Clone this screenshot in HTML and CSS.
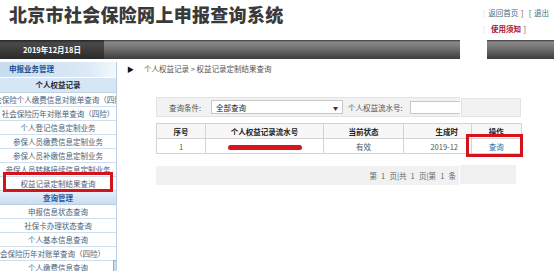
FILE: index.html
```html
<!DOCTYPE html>
<html lang="zh-CN">
<head>
    <meta charset="UTF-8">
    <title>北京市社会保险网上申报查询系统</title>
    <link rel="stylesheet" href="styles.css">
</head>
<body>

<header class="top">
    <div class="top__title">北京市社会保险网上申报查询系统</div>
    <div class="top__links">
        <div class="top__row"><span class="top__bracket">[</span> <a class="top__link">返回首页</a> ] &nbsp;[ <a class="top__link">退出</a></div>
        <div class="top__row"><span class="top__bracket">[</span> &nbsp;<a class="top__notice">使用须知</a> ]</div>
    </div>
</header>

<div class="bars">
    <div class="bar bar--main"><div class="bar__date">2019年12月18日</div></div>
    <div class="bar bar--side"></div>
</div>

<div class="content">
    <!-- Left menu -->
    <nav class="menu">
        <div class="menu__group">申报业务管理</div>
        <div class="menu__title">个人权益记录</div>
        <div class="menu__item">社会保险个人缴费信息对账单查询（四险）</div>
        <div class="menu__item">社会保险历年对账单查询（四险）</div>
        <div class="menu__item">个人登记信息定制业务</div>
        <div class="menu__item">参保人员缴费信息定制业务</div>
        <div class="menu__item">参保人员补缴信息定制业务</div>
        <div class="menu__item">参保人员转移接续信息定制业务</div>
        <div class="menu__item">权益记录定制结果查询</div>
        <div class="menu__section">查询管理</div>
        <div class="menu__item">申报信息状态查询</div>
        <div class="menu__item">社保卡办理状态查询</div>
        <div class="menu__item">个人基本信息查询</div>
        <div class="menu__item menu__item--left">会保险历年对账单查询（四险）</div>
        <div class="menu__item">个人缴费信息查询</div>
        <div class="mark mark--menu"></div>
        <div class="menu__scroll"></div>
    </nav>

    <!-- Main panel -->
    <main class="panel">
        <div class="crumb"><span class="crumb__arrow">&#9654;</span>个人权益记录 &gt; 权益记录定制结果查询</div>

        <div class="query">
            <span class="query__label">查询条件:</span>
            <div class="query__select">全部查询<span class="query__caret">&#9660;</span></div>
            <span class="query__label query__label--no">个人权益流水号:</span>
            <div class="query__input"></div>
        </div>

        <table class="grid">
            <tr>
                <th class="grid__no">序号</th>
                <th class="grid__serial">个人权益记录流水号</th>
                <th class="grid__state">当前状态</th>
                <th class="grid__time">生成时</th>
            </tr>
            <tr>
                <td>1</td>
                <td><span class="grid__redact"></span></td>
                <td>有效</td>
                <td class="grid__time">2019-12</td>
            </tr>
        </table>

        <div class="pager">第 1 页|共 1 页|第 1 条</div>
    </main>

    <!-- Right crop of the same page -->
    <aside class="side">
        <div class="side__query"></div>
        <table class="grid grid--side">
            <tr>
                <th class="grid__gap"></th>
                <th>操作</th>
            </tr>
            <tr>
                <td class="grid__gap"></td>
                <td><a class="grid__link">查询</a></td>
            </tr>
        </table>
        <div class="side__pager"></div>
        <div class="mark mark--side"></div>
    </aside>
</div>

</body>
</html>
```

FILE: styles.css
```css
/* General styles */
* {
    box-sizing: border-box;
}
body {
    margin: 0;
    width: 554px;
    height: 271px;
    overflow: hidden;
    background: #fff;
    font-family: "Noto Sans CJK SC", "Liberation Sans", sans-serif;
    font-size: 7.5px;
    color: #333;
}
a {
    text-decoration: none;
}

/* Header */
.top {
    display: flex;
    height: 40px;
}
.top__title {
    width: 483px;
    padding: 3px 0 0 9px;
    font-size: 18px;
    font-weight: 900;
    letter-spacing: 0.3px;
    line-height: 22px;
    color: #3a3a3a;
}
.top__links {
    padding-top: 8px;
    font-size: 7.5px;
    color: #555;
    white-space: nowrap;
}
.top__row {
    height: 16px;
    line-height: 10px;
    word-spacing: 1px;
}
.top__bracket {
    color: #ddd;
}
.top__link {
    color: #3d6f86;
}
.top__notice {
    color: #b0121b;
    font-weight: bold;
}

/* Dark bars */
.bars {
    display: flex;
    gap: 27px;
    height: 19px;
}
.bar {
    background: linear-gradient(#3a3a3a 0, #8a8a8a 2px, #6c6c6c 50%, #3c3c3c 100%);
}
.bar--main {
    width: 460px;
}
.bar--side {
    flex: 1;
}
.bar__date {
    width: 104px;
    height: 100%;
    background: linear-gradient(#262626 0, #4a4a4a 3px, #3a3a3a 60%, #2a2a2a 100%);
    color: #fff;
    font-weight: bold;
    font-size: 7.5px;
    line-height: 19px;
    text-align: center;
}

/* Body */
.content {
    display: flex;
    margin-top: 3px;
}

/* Menu */
.menu {
    position: relative;
    width: 117px;
    height: 210px;
    border-right: 1px solid #b9cde0;
    overflow: hidden;
}
.menu__group {
    height: 15px;
    padding-left: 9px;
    line-height: 14px;
    font-weight: bold;
    color: #1e4f8e;
    background: linear-gradient(90deg, #c7dcf0 0, #dce9f6 75%, #f4f8fc 100%);
}
.menu__title {
    height: 15px;
    margin-top: 1px;
    line-height: 14px;
    text-align: center;
    font-weight: bold;
    color: #1d2b3c;
    background: #d6e6f5;
    border-bottom: 1px solid #bcd3e8;
}
.menu__item {
    display: flex;
    justify-content: center;
    height: 14px;
    line-height: 13px;
    white-space: nowrap;
    color: #4b6178;
    border-bottom: 1px solid #cfdfee;
}
.menu__item--left {
    justify-content: flex-start;
}
.menu__section {
    height: 14px;
    line-height: 13px;
    text-align: center;
    font-weight: bold;
    color: #2256a6;
    background: linear-gradient(#e6f0f9, #c9ddef);
    border-bottom: 1px solid #b7cde3;
}
.menu__scroll {
    position: absolute;
    right: -1px;
    bottom: 0;
    width: 4px;
    height: 12px;
    background: #c6dbef;
    border: 1px solid #8fb2d3;
}

/* Annotation frames */
.mark {
    position: absolute;
    border: 3px solid #d3141c;
}
.mark--menu {
    left: 3px;
    top: 110px;
    width: 110px;
    height: 20px;
}
.mark--side {
    left: 6px;
    top: 72px;
    width: 57px;
    height: 23px;
}

/* Main panel */
.panel {
    width: 343px;
}
.crumb {
    height: 12px;
    margin-top: 1px;
    padding-left: 10px;
    line-height: 12px;
    color: #555;
}
.crumb__arrow {
    display: inline-block;
    width: 17px;
    font-size: 7px;
    color: #111;
}
.query {
    display: flex;
    align-items: center;
    margin: 22px 0 0 39px;
    width: 304px;
    height: 20px;
    background: #f2f2f2;
    border: 1px solid #e3e3e3;
    border-right: none;
}
.query__label {
    width: 54px;
    padding-left: 12px;
    white-space: nowrap;
    color: #555;
}
.query__label--no {
    width: auto;
    padding: 0 7px 0 5px;
}
.query__select {
    display: flex;
    justify-content: space-between;
    width: 132px;
    height: 14px;
    padding: 0 4px;
    line-height: 13px;
    background: #fff;
    border: 1px solid #c8c8c8;
    color: #222;
}
.query__caret {
    font-size: 5px;
    color: #333;
}
.query__input {
    flex: 1;
    height: 13px;
    background: #fff;
    border: 1px solid #c8c8c8;
    border-right: none;
}

/* Result table */
.grid {
    margin: 6px 0 0 39px;
    width: 304px;
    border-collapse: collapse;
    table-layout: fixed;
}
.grid th,
.grid td {
    height: 15px;
    padding: 0;
    border: 1px solid #d4d4d4;
    text-align: center;
    white-space: nowrap;
    overflow: hidden;
    line-height: 13px;
}
.grid th {
    background: #f7f7f7;
    color: #222;
    font-weight: bold;
}
.grid td {
    color: #555;
}
.grid__no {
    width: 49px;
}
.grid__serial {
    width: 118px;
}
.grid__state {
    width: 80px;
}
.grid .grid__time {
    text-align: right;
    padding-right: 2px;
    border-right: none;
}
.grid__redact {
    display: inline-block;
    width: 74px;
    height: 5px;
    border-radius: 3px;
    background: #d8141c;
    vertical-align: middle;
}
.pager {
    margin: 12px 0 0 39px;
    width: 303px;
    height: 19px;
    padding-right: 3px;
    line-height: 19px;
    text-align: right;
    word-spacing: 2.5px;
    background: #f1f1f1;
    color: #666;
}

/* Right crop */
.side {
    position: relative;
    width: 67px;
    padding-top: 36px;
}
.side__query {
    margin-left: 1px;
    width: 60px;
    height: 19px;
    background: #f2f2f2;
    border: 1px solid #e3e3e3;
}
.grid--side {
    margin: 6px 0 0 0;
    width: 62px;
}
.grid--side .grid__gap {
    width: 11px;
    border-left: none;
}
.grid__link {
    color: #2d6aa8;
}
.side__pager {
    margin-top: 11px;
    width: 56px;
    height: 19px;
    background: #f1f1f1;
}
```
